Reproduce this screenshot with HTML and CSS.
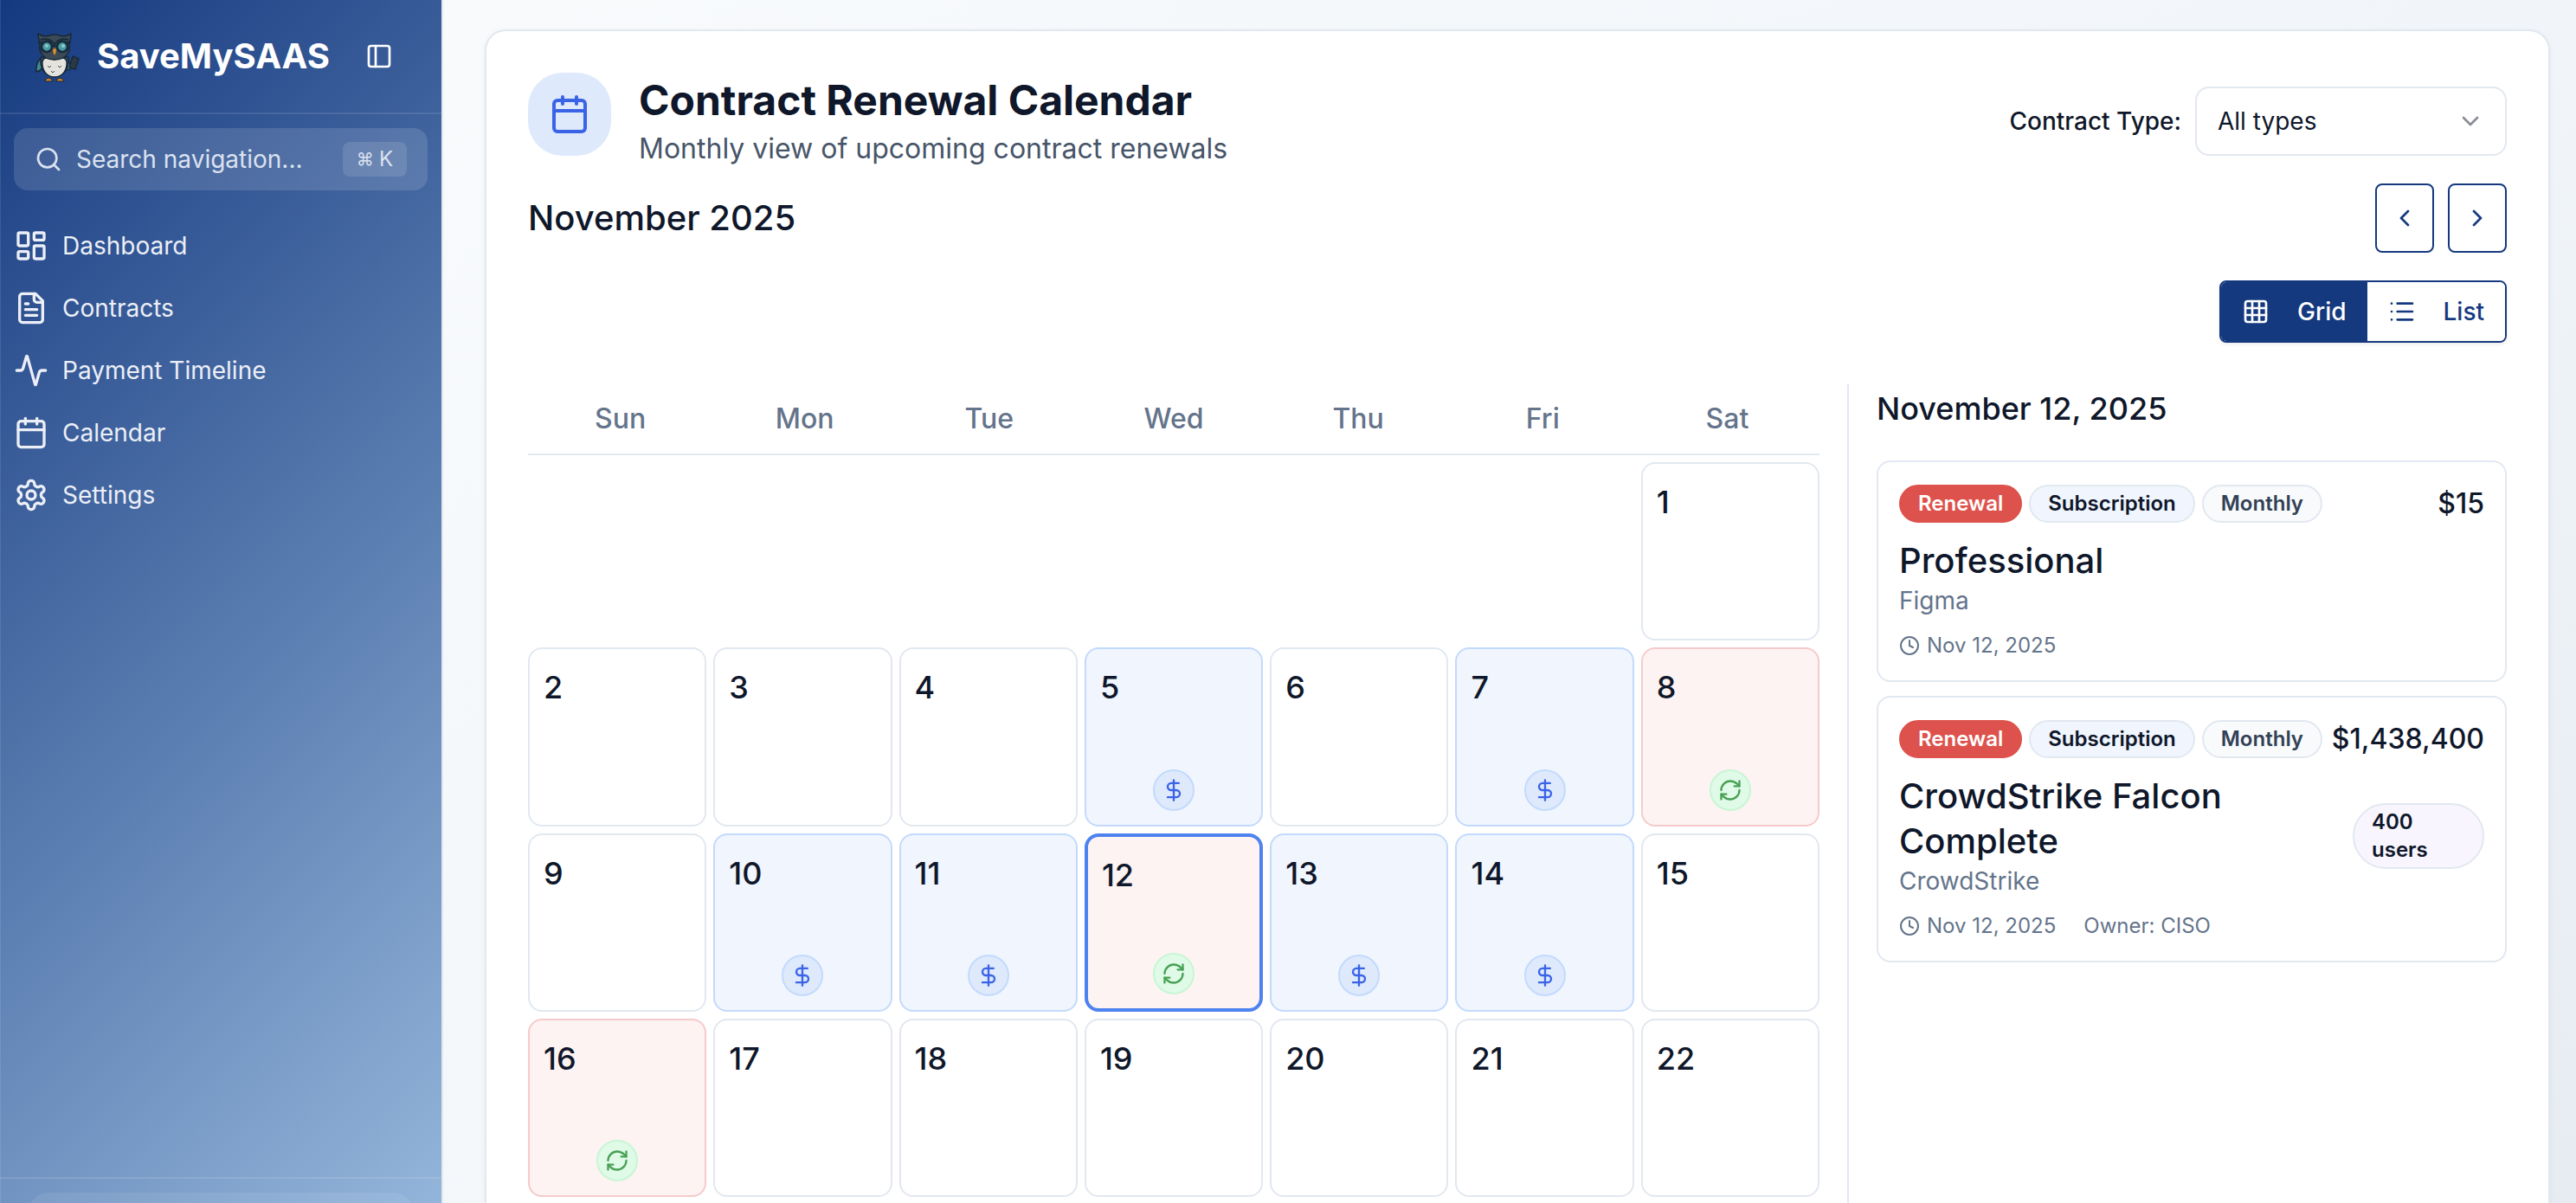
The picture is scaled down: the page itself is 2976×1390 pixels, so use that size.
FILE: index.html
```html
<!DOCTYPE html>
<html lang="en">
<head>
<meta charset="utf-8">
<title>Contract Renewal Calendar</title>
<link rel="stylesheet" href="styles.css">
</head>
<body>
<svg class="sprite" aria-hidden="true">
  <symbol id="calendar" viewBox="0 0 24 24"><path d="M8 2v4M16 2v4M3 10h18"/><rect x="3" y="4" width="18" height="18" rx="2"/></symbol>
  <symbol id="dollar" viewBox="0 0 24 24"><path d="M12 2v20M17 5H9.500a3.500 3.500 0 0 0 0 7h5a3.500 3.500 0 0 1 0 7H6"/></symbol>
  <symbol id="refresh" viewBox="0 0 24 24"><path d="M3 12a9 9 0 0 1 9-9 9.750 9.750 0 0 1 6.740 2.740L21 8"/><path d="M21 3v5h-5"/><path d="M21 12a9 9 0 0 1-9 9 9.750 9.750 0 0 1-6.740-2.740L3 16"/><path d="M8 16H3v5"/></symbol>
  <symbol id="clock" viewBox="0 0 24 24"><circle cx="12" cy="12" r="10"/><path d="M12 6v6l4 2"/></symbol>
</svg>
<div class="app">
  <aside class="sidebar">
    <div class="brand">
      <svg class="owl" viewBox="0 0 64 64" aria-hidden="true">
        <g stroke="#172a3c" stroke-width="1.500" stroke-linejoin="round">
          <path d="M16 34c-4 2-7 9-6 16 5-1 8-5 9-10z" fill="#3f8c92"/>
          <path d="M44 33c3 2 4 8 7 11l-3 4c-5-1-7-6-7-10z" fill="#3f8c92"/>
          <path d="M15 33c-1 13 4 22 16 22s17-9 16-22z" fill="#3b4a54"/>
          <path d="M31 36c-4-4-12-4-14 2-1 9 4 18 14 18s15-9 14-18c-2-6-10-6-14-2z" fill="#e4e3de"/>
          <path d="M12 6c5 3 10 3 13 2q6-2 12 0c3 1 8 1 13-2 0 5-1 8-2 10 2 13-5 20-17 20S12 29 14 16c-1-2-2-5-2-10z" fill="#3b4a54"/>
        </g>
        <path d="M15 13c8-2 12 0 16 5 4-5 8-7 16-5" fill="none" stroke="#172a3c" stroke-width="2"/>
        <circle cx="22" cy="21" r="6" fill="#4a9ba2" stroke="#172a3c" stroke-width="2.500"/>
        <circle cx="40" cy="21" r="6" fill="#4a9ba2" stroke="#172a3c" stroke-width="2.500"/>
        <circle cx="22" cy="20" r="2" fill="#8fcccc"/><circle cx="41" cy="20" r="2" fill="#8fcccc"/>
        <path d="M12 16h5M45 16h5M28 20h6" stroke="#172a3c" stroke-width="2"/>
        <path d="M29 24q2-2 4 0 0 4-2 7-2-3-2-7z" fill="#dd8f2c"/>
        <path d="M52 32l7 3-4 12-7-2z" fill="#2c3944" stroke="#172a3c" stroke-width="1.500"/>
        <path d="M23 43l2 2 2-2M35 43l2 2 2-2M27 49l2 2 2-2" fill="none" stroke="#4a4a4a"/>
        <path d="M20 61q1-4 4-4t5 4zM33 61q1-4 4-4t5 4z" fill="#c97f2c" stroke="#172a3c"/>
      </svg>
      <span class="brand-name">SaveMySAAS</span>
      <button class="collapse" aria-label="Collapse sidebar"><svg class="icon i32" viewBox="0 0 24 24"><rect x="3" y="3" width="18" height="18" rx="2"/><path d="M9 3v18"/></svg></button>
    </div>
    <label class="search">
      <svg class="icon i32" viewBox="0 0 24 24"><circle cx="11" cy="11" r="8"/><path d="m21 21-4.300-4.300"/></svg>
      <input type="text" placeholder="Search navigation..." aria-label="Search navigation">
      <kbd><span class="cmd">⌘</span>K</kbd>
    </label>
    <nav class="nav">
      <a href="#dashboard"><svg class="icon i40" viewBox="0 0 24 24"><rect x="3" y="3" width="7" height="9" rx="1"/><rect x="14" y="3" width="7" height="5" rx="1"/><rect x="14" y="12" width="7" height="9" rx="1"/><rect x="3" y="16" width="7" height="5" rx="1"/></svg>Dashboard</a>
      <a href="#contracts"><svg class="icon i40" viewBox="0 0 24 24"><path d="M15 2H6a2 2 0 0 0-2 2v16a2 2 0 0 0 2 2h12a2 2 0 0 0 2-2V7Z"/><path d="M14 2v4a2 2 0 0 0 2 2h4M10 9H8M16 13H8M16 17H8"/></svg>Contracts</a>
      <a href="#payments"><svg class="icon i40" viewBox="0 0 24 24"><path d="M22 12h-2.480a2 2 0 0 0-1.930 1.460l-2.350 8.360a.25.25 0 0 1-.48 0L9.240 2.180a.25.25 0 0 0-.48 0l-2.350 8.360A2 2 0 0 1 4.490 12H2"/></svg>Payment Timeline</a>
      <a href="#calendar"><svg class="icon i40"><use href="#calendar"/></svg>Calendar</a>
      <a href="#settings"><svg class="icon i40" viewBox="0 0 24 24"><path d="M12.220 2h-.44a2 2 0 0 0-2 2v.18a2 2 0 0 1-1 1.730l-.43.25a2 2 0 0 1-2 0l-.15-.08a2 2 0 0 0-2.730.73l-.22.38a2 2 0 0 0 .73 2.730l.15.1a2 2 0 0 1 1 1.720v.51a2 2 0 0 1-1 1.740l-.15.09a2 2 0 0 0-.73 2.730l.22.38a2 2 0 0 0 2.730.73l.15-.08a2 2 0 0 1 2 0l.43.25a2 2 0 0 1 1 1.730V20a2 2 0 0 0 2 2h.44a2 2 0 0 0 2-2v-.18a2 2 0 0 1 1-1.730l.43-.25a2 2 0 0 1 2 0l.15.08a2 2 0 0 0 2.730-.73l.22-.39a2 2 0 0 0-.73-2.730l-.15-.08a2 2 0 0 1-1-1.740v-.5a2 2 0 0 1 1-1.740l.15-.09a2 2 0 0 0 .73-2.730l-.22-.38a2 2 0 0 0-2.730-.73l-.15.08a2 2 0 0 1-2 0l-.43-.25a2 2 0 0 1-1-1.730V4a2 2 0 0 0-2-2z"/><circle cx="12" cy="12" r="3"/></svg>Settings</a>
    </nav>
    <div class="account"><div class="account-card"></div></div>
  </aside>

  <main class="main">
    <section class="card">
      <header class="head">
        <div class="head-icon"><svg class="icon i48"><use href="#calendar"/></svg></div>
        <div class="head-text">
          <h1>Contract Renewal Calendar</h1>
          <p>Monthly view of upcoming contract renewals</p>
        </div>
        <label class="filter-label" for="type">Contract Type:</label>
        <div class="select">
          <select id="type"><option>All types</option></select>
          <svg class="icon i32" viewBox="0 0 24 24"><path d="m6 9 6 6 6-6"/></svg>
        </div>
      </header>
      <div class="month">
        <h2>November 2025</h2>
        <div class="pager">
          <button aria-label="Previous month"><svg class="icon i32" viewBox="0 0 24 24"><path d="m15 18-6-6 6-6"/></svg></button>
          <button aria-label="Next month"><svg class="icon i32" viewBox="0 0 24 24"><path d="m9 18 6-6-6-6"/></svg></button>
        </div>
      </div>
      <div class="view">
        <div class="toggle">
          <button class="on"><svg class="icon i32" viewBox="0 0 24 24"><rect x="3" y="3" width="18" height="18" rx="2"/><path d="M3 9h18M3 15h18M9 3v18M15 3v18"/></svg>Grid</button>
          <button><svg class="icon i32" viewBox="0 0 24 24"><path d="M3 5h.01M3 12h.01M3 19h.01M8 5h13M8 12h13M8 19h13"/></svg>List</button>
        </div>
      </div>
      <div class="body">
        <div class="calendar">
          <div class="weekdays"><span>Sun</span><span>Mon</span><span>Tue</span><span>Wed</span><span>Thu</span><span>Fri</span><span>Sat</span></div>
          <div class="days">
            <button class="day first">1</button>
            <button class="day">2</button>
            <button class="day">3</button>
            <button class="day">4</button>
            <button class="day pay">5<span class="mark"><svg class="icon i28"><use href="#dollar"/></svg></span></button>
            <button class="day">6</button>
            <button class="day pay">7<span class="mark"><svg class="icon i28"><use href="#dollar"/></svg></span></button>
            <button class="day renew">8<span class="mark"><svg class="icon i28"><use href="#refresh"/></svg></span></button>
            <button class="day">9</button>
            <button class="day pay">10<span class="mark"><svg class="icon i28"><use href="#dollar"/></svg></span></button>
            <button class="day pay">11<span class="mark"><svg class="icon i28"><use href="#dollar"/></svg></span></button>
            <button class="day renew selected">12<span class="mark"><svg class="icon i28"><use href="#refresh"/></svg></span></button>
            <button class="day pay">13<span class="mark"><svg class="icon i28"><use href="#dollar"/></svg></span></button>
            <button class="day pay">14<span class="mark"><svg class="icon i28"><use href="#dollar"/></svg></span></button>
            <button class="day">15</button>
            <button class="day renew">16<span class="mark"><svg class="icon i28"><use href="#refresh"/></svg></span></button>
            <button class="day">17</button>
            <button class="day">18</button>
            <button class="day">19</button>
            <button class="day">20</button>
            <button class="day">21</button>
            <button class="day">22</button>
          </div>
        </div>
        <div class="details">
          <h3>November 12, 2025</h3>
          <article class="contract">
            <div class="tags"><span class="tag red">Renewal</span><span class="tag blue">Subscription</span><span class="tag gray">Monthly</span><strong class="price">$15</strong></div>
            <div class="info"><div class="name"><h4>Professional</h4><p>Figma</p></div></div>
            <div class="meta"><svg class="icon i24"><use href="#clock"/></svg><span>Nov 12, 2025</span></div>
          </article>
          <article class="contract">
            <div class="tags"><span class="tag red">Renewal</span><span class="tag blue">Subscription</span><span class="tag gray">Monthly</span><strong class="price">$1,438,400</strong></div>
            <div class="info"><div class="name"><h4>CrowdStrike Falcon Complete</h4><p>CrowdStrike</p></div><span class="tag users">400 users</span></div>
            <div class="meta"><svg class="icon i24"><use href="#clock"/></svg><span>Nov 12, 2025</span><span class="owner">Owner: CISO</span></div>
          </article>
        </div>
      </div>
    </section>
  </main>
</div>
</body>
</html>
```
FILE: styles.css
```css
* { box-sizing: border-box; }
body {
  margin: 0;
  font-family: Inter, "Liberation Sans", sans-serif;
  font-size: 28px;
  line-height: 40px;
  color: #0f172a;
}
h1, h2, h3, h4, p { margin: 0; }
button, input, select { font: inherit; color: inherit; margin: 0; }
button { cursor: pointer; }
.sprite { position: absolute; width: 0; height: 0; }
.icon {
  flex: none;
  display: block;
  fill: none;
  stroke: currentColor;
  stroke-width: 2;
  stroke-linecap: round;
  stroke-linejoin: round;
}
.i24 { width: 24px; height: 24px; }
.i28 { width: 28px; height: 28px; }
.i32 { width: 32px; height: 32px; }
.i40 { width: 40px; height: 40px; }
.i48 { width: 48px; height: 48px; }

.app { display: flex; min-height: 100vh; }

/* Sidebar */
.sidebar {
  flex: none;
  width: 512px;
  height: 100vh;
  position: sticky;
  top: 0;
  display: flex;
  flex-direction: column;
  overflow: hidden;
  border-right: 2px solid #e2e8f0;
  background: linear-gradient(135deg, #15397f, #93b5da);
  background-clip: padding-box;
  box-shadow: inset 1px 0 rgba(255, 255, 255, .1);
  color: #eceff7;
}
.brand {
  display: flex;
  align-items: center;
  height: 132px;
  padding: 0 48px 0 32px;
  border-bottom: 2px solid rgba(255, 255, 255, .1);
}
.owl { width: 64px; height: 64px; }
.brand-name { margin-left: 16px; font-size: 40px; line-height: 56px; font-weight: 700; color: #fff; }
.collapse { margin-left: auto; padding: 8px; border: 0; background: none; color: #fff; }
.search {
  display: flex;
  align-items: center;
  gap: 16px;
  height: 72px;
  margin: 16px 16px 28px;
  padding: 0 24px;
  border-radius: 16px;
  background: rgba(255, 255, 255, .13);
  color: #dbe2ef;
}
.search input { flex: 1; min-width: 0; padding: 0; border: 0; outline: 0; background: none; }
.search input::placeholder { color: #dbe2ef; opacity: 1; }
kbd {
  display: flex;
  align-items: center;
  gap: 6px;
  height: 40px;
  padding: 0 16px;
  border-radius: 8px;
  background: rgba(255, 255, 255, .12);
  font-family: inherit;
  font-size: 24px;
}
.cmd { font-size: 20px; }
.nav { display: flex; flex-direction: column; }
.nav a {
  display: flex;
  align-items: center;
  gap: 16px;
  height: 72px;
  padding: 0 16px;
  color: inherit;
  text-decoration: none;
}
.account {
  height: 30px;
  margin-top: auto;
  padding: 16px 32px 0;
  overflow: hidden;
  border-top: 2px solid rgba(255, 255, 255, .12);
}
.account-card { height: 96px; border-radius: 24px; background: rgba(255, 255, 255, .08); }

/* Main card */
.main {
  flex: 1;
  min-width: 0;
  display: flex;
  padding: 34px 30px 0 48px;
  background: linear-gradient(135deg, #f8fafc, #f1f5f9 64%, #e7ecf2);
}
.card {
  flex: 1;
  min-width: 0;
  display: flex;
  flex-direction: column;
  padding: 48px 48px 0;
  border: 2px solid #e2e8f0;
  border-bottom: 0;
  border-radius: 24px 24px 0 0;
  background: #fff;
  box-shadow: 0 2px 6px rgba(15, 23, 42, .05);
}
.head { display: flex; align-items: flex-start; height: 112px; }
.head-icon {
  display: grid;
  place-items: center;
  width: 96px;
  height: 96px;
  border-radius: 40px;
  background: #dee9fc;
  color: #3a63e6;
}
.head-text { flex: 1; margin-left: 32px; }
h1 { font-size: 48px; line-height: 64px; font-weight: 700; }
.head-text p { font-size: 32px; line-height: 48px; color: #475569; }
.filter-label { align-self: center; margin-right: 16px; font-weight: 500; }
.select { align-self: center; display: grid; align-items: center; width: 360px; }
.select > * { grid-area: 1 / 1; }
.select select {
  width: 100%;
  height: 80px;
  padding: 0 72px 0 24px;
  appearance: none;
  border: 2px solid #e2e8f0;
  border-radius: 16px;
  background: #fff;
}
.select svg { justify-self: end; margin-right: 26px; color: #8a8d96; pointer-events: none; }
.month { display: flex; align-items: center; justify-content: space-between; margin-top: 16px; }
h2 { font-size: 40px; line-height: 56px; font-weight: 500; }
.pager { display: flex; gap: 16px; }
.pager button {
  display: grid;
  place-items: center;
  width: 68px;
  height: 80px;
  padding: 0;
  border: 2px solid #15397f;
  border-radius: 8px;
  background: #fff;
  color: #15397f;
}
.view { display: flex; justify-content: flex-end; margin-top: 32px; }
.toggle {
  display: flex;
  height: 72px;
  overflow: hidden;
  border: 2px solid #15397f;
  border-radius: 8px;
  box-shadow: 0 2px 4px rgba(0, 0, 0, .08);
}
.toggle button {
  display: flex;
  align-items: center;
  gap: 32px;
  padding: 0 24px;
  border: 0;
  background: #fff;
  color: #15397f;
  font-weight: 500;
}
.toggle .on { background: #15397f; color: #fff; }

.body { flex: 1; display: grid; grid-template-columns: 2fr 1fr; margin-top: 48px; }
.calendar { padding-right: 32px; }
.weekdays {
  display: grid;
  grid-template-columns: repeat(7, 1fr);
  align-items: center;
  height: 82px;
  border-bottom: 2px solid #e2e8f0;
  color: #64748b;
  font-size: 32px;
  font-weight: 500;
  text-align: center;
}
.days { display: grid; grid-template-columns: repeat(7, 1fr); gap: 8px; margin-top: 8px; }
.day {
  display: flex;
  flex-direction: column;
  justify-content: space-between;
  aspect-ratio: 1;
  padding: 16px;
  border: 2px solid #e2e8f0;
  border-radius: 16px;
  background: #fff;
  font-size: 36px;
  line-height: 56px;
  font-weight: 500;
  text-align: left;
}
.first { grid-column: 7; }
.mark {
  display: grid;
  place-items: center;
  align-self: center;
  width: 48px;
  height: 48px;
  border: 2px solid #c3dafc;
  border-radius: 50%;
  background: #dee9fc;
  color: #3a63e6;
}
.pay { border-color: #c3dafc; background: #f0f5fe; }
.renew { border-color: #f6caca; background: #fdf3f2; }
.renew .mark { border-color: #c6f6d5; background: #e0fae8; color: #48a155; }
.selected { border: 4px solid #4d82f0; }

/* Selected day details */
.details { padding-left: 32px; border-left: 2px solid #e2e8f0; }
h3 { margin-bottom: 32px; font-size: 36px; line-height: 56px; font-weight: 500; }
.contract { padding: 24px; margin-bottom: 16px; border: 2px solid #e2e8f0; border-radius: 16px; }
.tags { display: flex; align-items: center; gap: 8px; height: 48px; }
.tag {
  padding: 4px 20px;
  border: 2px solid #e2e8f0;
  border-radius: 38px;
  font-size: 24px;
  line-height: 32px;
  font-weight: 600;
}
.red { border-color: #dd524c; background: #dd524c; color: #fff; }
.blue { background: #f0f5fe; }
.gray { background: #f8fafc; color: #334155; }
.users { width: 152px; background: #f8f5fe; }
.price { margin-left: auto; font-size: 32px; font-weight: 500; }
.info { display: flex; align-items: center; justify-content: space-between; margin-top: 16px; }
.name { max-width: 460px; }
h4 { font-size: 40px; line-height: 52px; font-weight: 500; }
.name p { color: #64748b; }
.meta {
  display: flex;
  align-items: center;
  gap: 8px;
  margin-top: 16px;
  color: #64748b;
  font-size: 24px;
  line-height: 32px;
}
.owner { margin-left: 24px; }
```
